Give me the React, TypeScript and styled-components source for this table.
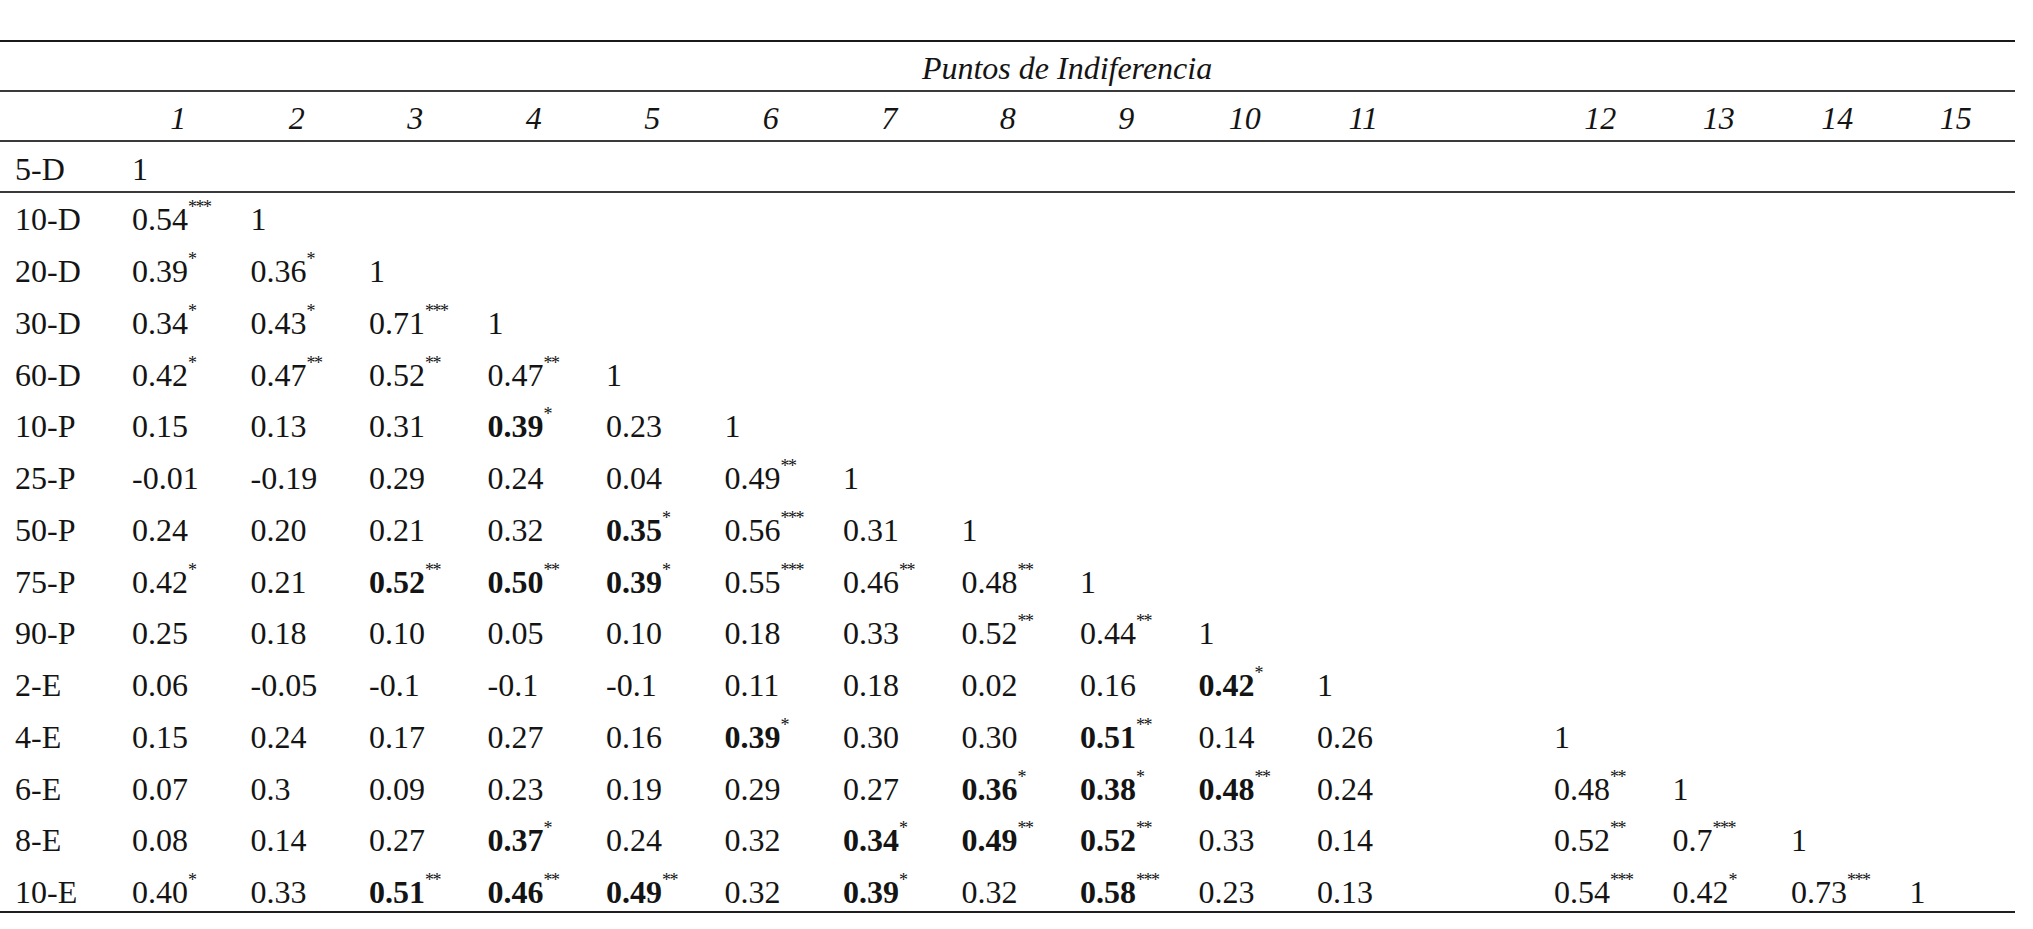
import React from "react";
import styled, { createGlobalStyle } from "styled-components";

const GlobalStyle = createGlobalStyle`
  html, body {
    margin: 0;
    padding: 0;
    background: #ffffff;
  }
  body {
    font-family: "Liberation Serif", "Times New Roman", serif;
    color: #141414;
  }
`;

const Page = styled.div`
  padding-top: 40px;
  width: 2033px;
`;

const Table = styled.table`
  width: 2015px;
  table-layout: fixed;
  border-collapse: separate;
  border-spacing: 0;
  font-family: "Liberation Serif", "Times New Roman", serif;
  font-size: 32px;
  color: #141414;
`;

const LabelCol = styled.col`
  width: 119px;
`;

const DataCol = styled.col`
  width: 118.5px;
`;

const TitleRow = styled.tr`
  height: 52px;
`;

const NumberRow = styled.tr`
  height: 50px;
`;

const BodyRow = styled.tr<{ $h: number }>`
  height: ${(p) => p.$h}px;
`;

const HeadCell = styled.th<{ $top?: boolean }>`
  padding: 5px 0 0 0;
  font-weight: normal;
  font-style: italic;
  text-align: center;
  vertical-align: middle;
  white-space: nowrap;
  line-height: normal;
  border-top: ${(p) => (p.$top ? "2px solid #1a1a1a" : "none")};
  border-bottom: 2px solid #3a3a3a;
`;

const LabelCell = styled.th<{ $rule?: boolean; $dark?: boolean; $pt: number }>`
  padding: ${(p) => p.$pt}px 0 0 15px;
  font-weight: normal;
  text-align: left;
  vertical-align: middle;
  white-space: nowrap;
  line-height: normal;
  border-bottom: ${(p) =>
    p.$rule ? `2px solid ${p.$dark ? "#1f1f1f" : "#3a3a3a"}` : "none"};
`;

const DataCell = styled.td<{ $rule?: boolean; $dark?: boolean; $pt: number }>`
  padding: ${(p) => p.$pt}px 0 0 13px;
  text-align: left;
  vertical-align: middle;
  white-space: nowrap;
  line-height: normal;
  border-bottom: ${(p) =>
    p.$rule ? `2px solid ${p.$dark ? "#1f1f1f" : "#3a3a3a"}` : "none"};
`;

const Num = styled.span<{ $bold?: boolean }>`
  font-weight: ${(p) => (p.$bold ? "bold" : "normal")};
`;

const Sig = styled.span`
  font-size: 18px;
  letter-spacing: -1.5px;
  font-weight: normal;
  line-height: 0;
  vertical-align: 17px;
`;

const headers = ["1", "2", "3", "4", "5", "6", "7", "8", "9", "10", "11", "", "12", "13", "14", "15"];

const rows: [string, string[]][] = [
  ["5-D", ["1"]],
  ["10-D", ["0.54***", "1"]],
  ["20-D", ["0.39*", "0.36*", "1"]],
  ["30-D", ["0.34*", "0.43*", "0.71***", "1"]],
  ["60-D", ["0.42*", "0.47**", "0.52**", "0.47**", "1"]],
  ["10-P", ["0.15", "0.13", "0.31", "!0.39*", "0.23", "1"]],
  ["25-P", ["-0.01", "-0.19", "0.29", "0.24", "0.04", "0.49**", "1"]],
  ["50-P", ["0.24", "0.20", "0.21", "0.32", "!0.35*", "0.56***", "0.31", "1"]],
  ["75-P", ["0.42*", "0.21", "!0.52**", "!0.50**", "!0.39*", "0.55***", "0.46**", "0.48**", "1"]],
  ["90-P", ["0.25", "0.18", "0.10", "0.05", "0.10", "0.18", "0.33", "0.52**", "0.44**", "1"]],
  ["2-E", ["0.06", "-0.05", "-0.1", "-0.1", "-0.1", "0.11", "0.18", "0.02", "0.16", "!0.42*", "1"]],
  ["4-E", ["0.15", "0.24", "0.17", "0.27", "0.16", "!0.39*", "0.30", "0.30", "!0.51**", "0.14", "0.26", "", "1"]],
  ["6-E", ["0.07", "0.3", "0.09", "0.23", "0.19", "0.29", "0.27", "!0.36*", "!0.38*", "!0.48**", "0.24", "", "0.48**", "1"]],
  ["8-E", ["0.08", "0.14", "0.27", "!0.37*", "0.24", "0.32", "!0.34*", "!0.49**", "!0.52**", "0.33", "0.14", "", "0.52**", "0.7***", "1"]],
  ["10-E", ["0.40*", "0.33", "!0.51**", "!0.46**", "!0.49**", "0.32", "!0.39*", "0.32", "!0.58***", "0.23", "0.13", "", "0.54***", "0.42*", "0.73***", "1"]],
];

function Value({ raw }: { raw: string }) {
  if (!raw) return null;
  const bold = raw.startsWith("!");
  const body = bold ? raw.slice(1) : raw;
  const m = body.match(/^([^*]*)(\**)$/);
  const num = m ? m[1] : body;
  const stars = m ? m[2] : "";
  return (
    <>
      <Num $bold={bold}>{num}</Num>
      {stars && <Sig>{stars}</Sig>}
    </>
  );
}

export default function App() {
  return (
    <Page>
      <GlobalStyle />
      <Table>
        <colgroup>
          <LabelCol />
          {headers.map((_, i) => (
            <DataCol key={i} />
          ))}
        </colgroup>
        <thead>
          <TitleRow>
            <HeadCell $top />
            <HeadCell $top colSpan={16}>
              Puntos de Indiferencia
            </HeadCell>
          </TitleRow>
          <NumberRow>
            <HeadCell />
            {headers.map((h, i) => (
              <HeadCell key={i}>{h}</HeadCell>
            ))}
          </NumberRow>
        </thead>
        <tbody>
          {rows.map(([label, vals], r) => {
            const first = r === 0;
            const last = r === rows.length - 1;
            const rule = first || last;
            const h = first ? 51 : last ? 47.5 : 51.76;
            const pt = first ? 5 : last ? 8 : 2;
            return (
              <BodyRow key={label} $h={h}>
                <LabelCell scope="row" $rule={rule} $dark={last} $pt={pt}>
                  {label}
                </LabelCell>
                {headers.map((_, c) => (
                  <DataCell key={c} $rule={rule} $dark={last} $pt={pt}>
                    <Value raw={vals[c] || ""} />
                  </DataCell>
                ))}
              </BodyRow>
            );
          })}
        </tbody>
      </Table>
    </Page>
  );
}
